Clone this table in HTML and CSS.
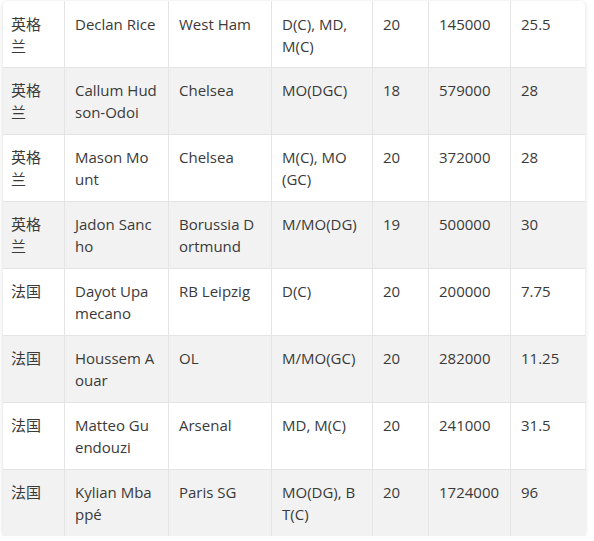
FILE: index.html
```html
<!DOCTYPE html>
<html lang="zh">
<head>
<meta charset="utf-8">
<title>Players</title>
<link rel="stylesheet" href="styles.css">
</head>
<body>
<div class="card">
  <table class="players">
    <colgroup>
      <col class="c-nat"><col class="c-name"><col class="c-club"><col class="c-pos"><col class="c-age"><col class="c-val"><col class="c-ca">
    </colgroup>
    <tbody>
      <tr><td>英格<br>兰</td><td>Declan Rice</td><td>West Ham</td><td>D(C), MD,<br>M(C)</td><td>20</td><td>145000</td><td>25.5</td></tr>
      <tr class="alt"><td>英格<br>兰</td><td>Callum Hud<br>son-Odoi</td><td>Chelsea</td><td>MO(DGC)</td><td>18</td><td>579000</td><td>28</td></tr>
      <tr><td>英格<br>兰</td><td>Mason Mo<br>unt</td><td>Chelsea</td><td>M(C), MO<br>(GC)</td><td>20</td><td>372000</td><td>28</td></tr>
      <tr class="alt"><td>英格<br>兰</td><td>Jadon Sanc<br>ho</td><td>Borussia D<br>ortmund</td><td>M/MO(DG)</td><td>19</td><td>500000</td><td>30</td></tr>
      <tr><td>法国</td><td>Dayot Upa<br>mecano</td><td>RB Leipzig</td><td>D(C)</td><td>20</td><td>200000</td><td>7.75</td></tr>
      <tr class="alt"><td>法国</td><td>Houssem A<br>ouar</td><td>OL</td><td>M/MO(GC)</td><td>20</td><td>282000</td><td>11.25</td></tr>
      <tr><td>法国</td><td>Matteo Gu<br>endouzi</td><td>Arsenal</td><td>MD, M(C)</td><td>20</td><td>241000</td><td>31.5</td></tr>
      <tr class="alt"><td>法国</td><td>Kylian Mba<br>ppé</td><td>Paris SG</td><td>MO(DG), B<br>T(C)</td><td>20</td><td>1724000</td><td>96</td></tr>
    </tbody>
  </table>
</div>
</body>
</html>
```
FILE: styles.css
```css
html, body {
  margin: 0;
  padding: 0;
  background: #ffffff;
}
body {
  font-family: "Open Sans", "Noto Sans CJK SC", sans-serif;
  font-size: 15px;
  color: #3a3a3a;
  padding: 1px 0 0 3px;
}
.card {
  width: 582px;
  border-radius: 5px;
  overflow: hidden;
  background: #fff;
  box-shadow: 0 1px 4px rgba(0, 0, 0, 0.16);
}
.players {
  width: 582px;
  table-layout: fixed;
  border-collapse: separate;
  border-spacing: 0;
}
.c-nat { width: 61px; }
.c-name { width: 104px; }
.c-club { width: 103px; }
.c-pos { width: 101px; }
.c-age { width: 56px; }
.c-val { width: 82px; }
.c-ca { width: 75px; }
.players td {
  box-sizing: border-box;
  height: 67px;
  vertical-align: top;
  padding: 11px 6px 0 10px;
  line-height: 22px;
  white-space: nowrap;
  border-top: 1px solid #e4e4e4;
  border-left: 1px solid #e4e4e4;
}
.players tr:first-child td {
  border-top: 0;
  height: 66px;
  padding-top: 12px;
}
.players td:first-child {
  border-left: 0;
  padding-left: 8px;
}
.players tr.alt td {
  background: #f2f2f2;
}
```
